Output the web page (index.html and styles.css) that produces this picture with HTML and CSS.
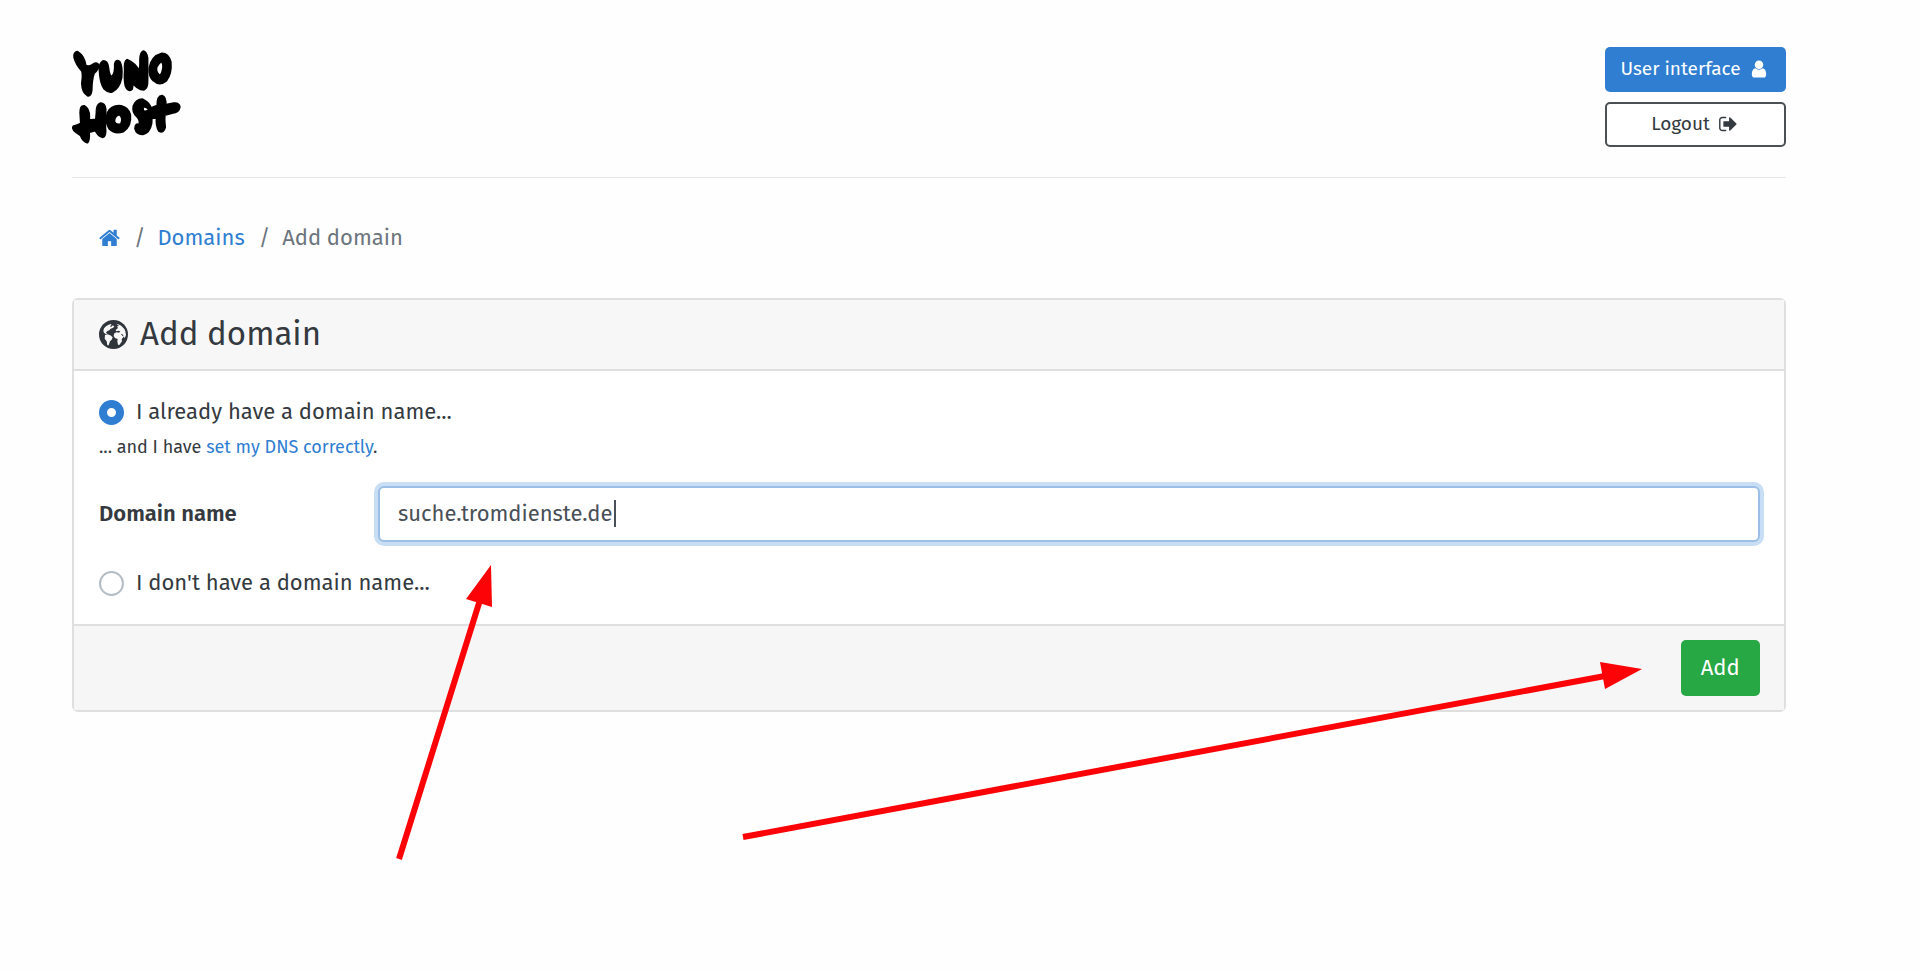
FILE: index.html
```html
<!DOCTYPE html>
<html lang="en">
<head>
<meta charset="utf-8">
<title>Add domain - YunoHost</title>
<link rel="stylesheet" href="styles.css">
</head>
<body>
<div class="container">
  <header class="topbar">
    <a class="logo" href="#" aria-label="YunoHost">
      <svg viewBox="36 30 328 282" aria-hidden="true">
        <g class="brush">
          <path d="M52 36Q42 38 44 52Q49 73 67 92Q71 103 67 130Q68 157 84 166Q92 167 94 150Q94 120 101 99Q116 86 115 75Q111 66 99 74Q86 83 76 77Q72 48 52 36Z"/>
          <path d="M130 64Q119 70 120 90Q122 130 134 146Q144 157 157 154Q178 143 184 112Q187 80 179 66Q169 58 166 72Q168 100 156 112Q147 109 144 82Q142 64 130 64Z"/>
          <path d="M202 60Q194 64 196 90Q194 120 198 137Q205 156 216 146Q219 138 217 122Q232 148 252 148Q263 145 262 120L262 54Q259 35 251 34Q243 36 242 58Q243 82 239 96Q227 70 202 60Z"/>
          <path fill-rule="evenodd" d="M307 41Q276 49 270 84Q268 109 282 121Q299 137 319 121Q335 100 332 66Q325 41 307 41ZM307 62Q318 84 302 109Q286 98 289 82Q297 65 307 62Z"/>
          <path d="M72 199Q62 198 62 218L64 251Q52 257 41 260Q37 267 48 275L63 286Q70 304 82 307Q88 302 86 276L107 270Q115 288 129 291Q138 287 135 264L136 208Q134 190 121 191Q110 196 111 218L109 240L86 242Q90 208 72 199Z"/>
          <path fill-rule="evenodd" d="M184 199Q155 196 144 219Q136 247 150 267Q165 282 190 274Q214 257 210 224Q203 203 184 199ZM180 223Q193 235 184 253Q169 260 162 245Q163 225 180 223Z"/>
          <path d="M248 179Q229 180 222 198Q218 217 233 230Q244 241 239 257Q228 248 227 266Q231 283 249 282Q269 278 274 251L275 234L292 229Q289 258 299 273Q311 279 315 262Q312 240 314 224L337 218Q357 216 359 201Q357 189 342 191L316 196Q319 173 307 168Q293 169 294 197L272 206Q271 191 248 179ZM248 199Q258 197 270 208Q260 220 249 214Z"/>
        </g>
      </svg>
    </a>
    <nav class="account">
      <a class="btn btn-primary" href="#">User interface
        <svg class="icon" viewBox="256 0 1280 1792" aria-hidden="true"><path d="M1536 1399q0 109-62.5 187t-150.500 78h-854q-88 0-150.500-78t-62.500-187q0-85 8.500-160.500t31.500-152 58.500-131 94-89 134.500-34.500q131 128 313 128t313-128q76 0 134.500 34.500t94 89 58.500 131 31.500 152 8.500 160.500zm-256-887q0 159-112.500 271.500t-271.500 112.500-271.500-112.500-112.500-271.500 112.500-271.500 271.500-112.500 271.500 112.500 112.500 271.500z"/></svg>
      </a>
      <button class="btn btn-outline" type="button">Logout
        <svg class="icon" viewBox="64 0 1600 1792" aria-hidden="true"><path d="M704 1440q0 4 1 20t.5 26.500-3 23.500-10 19.500-20.500 6.500h-320q-119 0-203.500-84.500t-84.500-203.500v-704q0-119 84.500-203.500t203.500-84.500h320q13 0 22.500 9.500t9.500 22.500q0 4 1 20t.5 26.500-3 23.500-10 19.500-20.500 6.500h-320q-66 0-113 47t-47 113v704q0 66 47 113t113 47h312l11.500 1 11.500 3 8 5.500 7 9 2 13.500zm928-544q0 26-19 45l-544 544q-19 19-45 19t-45-19-19-45v-288h-448q-26 0-45-19t-19-45v-384q0-26 19-45t45-19h448v-288q0-26 19-45t45-19 45 19l544 544q19 19 19 45z"/></svg>
      </button>
    </nav>
  </header>

  <nav aria-label="Breadcrumb">
    <ol class="breadcrumb">
      <li><a class="home-link" href="#" aria-label="Home"><svg class="home" viewBox="64 200 1664 1400" aria-hidden="true"><path d="M1472 992v480q0 26-19 45t-45 19h-384v-384h-256v384h-384q-26 0-45-19t-19-45v-480q0-1 .5-3t.5-3l575-474 575 474q1 2 1 6zm223-69l-62 74q-8 9-21 11h-3q-13 0-21-7l-692-577-692 577q-12 8-24 7-13-2-21-11l-62-74q-8-10-7-23.500t11-21.500l719-599q32-26 76-26t76 26l244 204v-195q0-14 9-23t23-9h192q14 0 23 9t9 23v408l219 182q10 8 11 21.500t-7 23.500z"/></svg></a></li>
      <li><a href="#">Domains</a></li>
      <li aria-current="page">Add domain</li>
    </ol>
  </nav>

  <form class="card">
    <div class="card-header">
      <svg class="globe" viewBox="0 0 87 87" aria-hidden="true">
        <circle class="globe-sea" cx="43.5" cy="43.5" r="43.5"/>
        <path class="globe-land" d="M15 25L22 18L29 14L35 12L38 15L33 18L36 21L42 16L46 20L41 24L35 26L31 31L25 33L21 38L25 42L20 42L15 38L13 33Z"/>
        <path class="globe-land" d="M18 45L25 43L34 46L41 52L38 59L33 64L29 76L25 76L23 64L17 56Z"/>
        <path class="globe-land" d="M52 11Q67 14 76 27L79 34L81 45L77 55L74 48L69 41L66 43L71 48L75 49L68 58L69 64L61 75L57 74L55 64L56 57L48 54L44 48L46 40L53 37L60 38L64 34L58 32L52 34L50 30L57 24L54 19L60 18Z"/>
      </svg>
      <h2>Add domain</h2>
    </div>
    <div class="card-body">
      <label class="choice"><input type="radio" name="kind" checked>I already have a domain name...</label>
      <p class="hint">... and I have <a href="#">set my DNS correctly</a>.</p>
      <div class="field">
        <label for="domain">Domain name</label>
        <div class="text-wrap">
          <input id="domain" class="text" type="text" value="suche.tromdienste.de">
          <span class="caret"></span>
        </div>
      </div>
      <label class="choice"><input type="radio" name="kind">I don't have a domain name...</label>
    </div>
    <div class="card-footer">
      <button class="btn btn-success" type="submit">Add</button>
    </div>
  </form>
</div>
<svg class="arrows" viewBox="0 0 1920 971" aria-hidden="true">
  <path class="shaft" d="M399 859L480 600M743 837L1605 676"/>
  <path class="head" d="M491 565L492 607L466 599ZM1642 669L1605 689L1600 662Z"/>
</svg>
</body>
</html>
```

FILE: styles.css
```css
* { box-sizing: border-box; }

body {
  margin: 0;
  background: #fefefe;
  color: #343a40;
  font: 22px/34px "Fira Sans", "Noto Sans", sans-serif;
}

a { color: #2f7ed2; text-decoration: none; }

.container { margin: 0 7% 0 72px; }

.topbar {
  display: flex;
  justify-content: space-between;
  align-items: flex-start;
  padding: 47px 0 30px;
  border-bottom: 1px solid #e6e6e6;
}

.logo { margin-top: 3px; }
.logo svg { display: block; width: 109px; height: 94px; }
.brush { fill: #000; stroke: #000; stroke-width: 8; stroke-linejoin: round; }

.account { display: flex; flex-direction: column; gap: 10px; }

.icon { width: 24px; height: 20px; fill: currentColor; }

.btn {
  display: flex;
  align-items: center;
  justify-content: center;
  gap: 6px;
  border: 2px solid transparent;
  border-radius: 5px;
  font: inherit;
  font-size: 19px;
  line-height: 28px;
  padding: 6px 13px 7px;
  cursor: pointer;
}
.btn-primary { background: #2f7ed2; color: #fff; }
.btn-outline { background: #fff; color: #343a40; border-color: #4b5054; }
.btn-success { background: #28a745; color: #fff; font-size: 22px; padding: 12px 18px; }

.breadcrumb {
  display: flex;
  margin: 0;
  padding: 43px 27px;
  list-style: none;
  color: #6c757d;
}
.breadcrumb li { display: flex; }
.breadcrumb li + li::before { content: "/"; padding: 0 12px 0 14px; }
.home-link { display: flex; align-items: center; }
.home { width: 21px; height: 18px; fill: currentColor; }

.card { border: 2px solid #dfdfdf; border-radius: 6px; background: #fff; }
.card-header {
  display: flex;
  align-items: center;
  gap: 12px;
  padding: 14px 25px 15px;
  background: #f7f7f7;
  border-bottom: 2px solid #dfdfdf;
}
.card-header h2 { margin: 0; font-size: 33px; line-height: 40px; font-weight: 400; }
.globe { width: 29px; height: 29px; }
.globe-sea { fill: #2f353b; }
.globe-land { fill: #f7f7f7; }

.card-body { padding: 24px 24px 24px 25px; }
.choice { display: flex; align-items: center; gap: 12px; }
.choice input {
  appearance: none;
  width: 25px;
  height: 25px;
  margin: 0;
  border: 2px solid #b4bcc4;
  border-radius: 50%;
  background: #fff;
}
.choice input:checked { border: 8px solid #2f7ed2; }
.hint { margin: 0 0 21px; font-size: 18px; line-height: 36px; }

.field { display: grid; grid-template-columns: 279px 1fr; align-items: center; margin-bottom: 24px; }
.field label { font-weight: 600; }
.text-wrap { position: relative; }
.text {
  display: block;
  width: 100%;
  height: 56px;
  padding: 0 18px 2px;
  border: 2px solid #9dbfe5;
  border-radius: 6px;
  outline: 0;
  box-shadow: 0 0 0 4px #c8def4;
  background: #fff;
  color: #495057;
  font: inherit;
}
.caret { position: absolute; left: 236px; top: 14px; width: 2px; height: 27px; background: #495057; }

.card-footer {
  display: flex;
  justify-content: flex-end;
  padding: 14px 24px;
  background: #f6f6f6;
  border-top: 2px solid #dfdfdf;
}

.arrows { position: absolute; top: 0; left: 0; width: 100%; pointer-events: none; }
.shaft { stroke: #fb0307; stroke-width: 6; fill: none; }
.head { fill: #fb0307; }
```
